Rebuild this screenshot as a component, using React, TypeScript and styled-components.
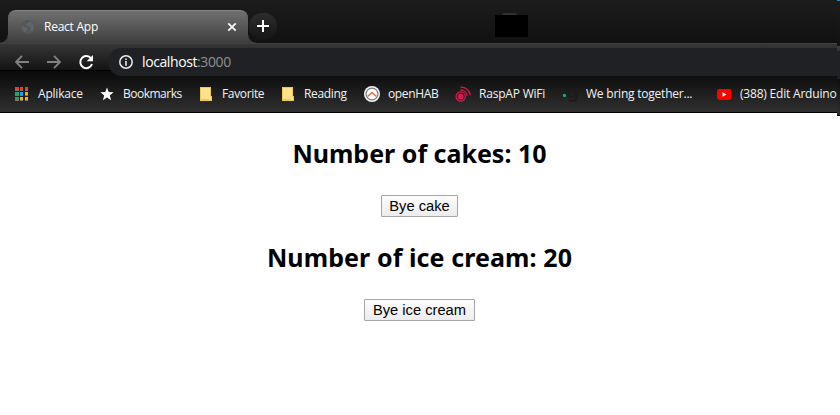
import React from 'react';
import styled, { createGlobalStyle } from 'styled-components';

const GlobalStyle = createGlobalStyle`
  * { box-sizing: border-box; }
  body { margin: 0; background: #fff; overflow: hidden; font-family: "Open Sans", "Noto Sans", sans-serif; }
`;

const Window = styled.div`
  width: 840px;
  height: 415px;
  background: #fff;
  position: relative;
`;

const TabStrip = styled.div`
  height: 43px;
  display: flex;
  align-items: flex-start;
  padding: 10px 0 0 8px;
  background: linear-gradient(#1c1c1c, #111 100%);
`;

const Tab = styled.div`
  position: relative;
  width: 240px;
  height: 33px;
  padding: 0 10px 0 12px;
  display: flex;
  align-items: center;
  border-radius: 8px 8px 0 0;
  border-top: 1px solid #858585;
  background: linear-gradient(#707070, #3e3e3e);
  &::before, &::after {
    content: '';
    position: absolute;
    bottom: 0;
    width: 8px;
    height: 8px;
  }
  &::before { left: -8px; background: radial-gradient(circle at 0 0, transparent 7px, #3e3e3e 8px); }
  &::after { right: -8px; background: radial-gradient(circle at 100% 0, transparent 7px, #3e3e3e 8px); }
`;

const Label = styled.span<{ $space?: number }>`
  font-size: 12px;
  line-height: 16px;
  white-space: nowrap;
  color: #f2f3f4;
  letter-spacing: ${(p) => p.$space ?? 0}px;
`;

const TabTitle = styled(Label)`
  flex: 1;
  margin: -1px 0 0 8px;
  color: #fff;
`;

const NewTab = styled.div`
  width: 28px;
  height: 27px;
  margin: 3px 0 0 1px;
  border-radius: 13px;
  display: grid;
  place-items: center;
  background: linear-gradient(#2d2d2d, #151515);
  svg { margin-top: -2px; }
`;

const Redaction = styled.div`
  width: 33px;
  height: 22px;
  margin: 5px 0 0 218px;
  background: #000;
  position: relative;
  &::before {
    content: '';
    position: absolute;
    left: 7px;
    top: -2px;
    width: 15px;
    height: 2px;
    border-radius: 8px 8px 0 0;
    background: #303030;
  }
`;

const Toolbar = styled.div`
  height: 33px;
  display: flex;
  align-items: center;
  padding-left: 14px;
  border-top: 1px solid #414141;
  background: linear-gradient(#363636 0, #141414 26px, #000 26px, #000 27px, #0b0b0b 27px, #0e0e0e);
`;

const NavButton = styled.div`
  width: 32px;
  height: 17px;
  margin-top: 4px;
  display: flex;
  align-items: center;
`;

const AddressBar = styled.div`
  flex: 1;
  align-self: flex-end;
  height: 28px;
  margin-left: -2px;
  padding-left: 11px;
  display: flex;
  align-items: center;
  border-radius: 14px 0 0 14px;
  background: #202124;
`;

const Url = styled.span`
  margin-left: 9px;
  font-size: 14px;
  line-height: 20px;
  letter-spacing: -0.4px;
  color: #fff;
`;

const Port = styled.span`
  color: #8f9195;
`;

const Bookmarks = styled.div`
  height: 37px;
  display: grid;
  grid-template-columns: 85px 99px 82px 84px 91px 107px 154px 124px;
  align-items: center;
  border-bottom: 1px solid #000;
  padding-left: 14px;
  background: linear-gradient(#0e0e0e, #303030);
`;

const Bookmark = styled.div`
  display: grid;
  grid-template-columns: 16px 1fr;
  column-gap: 8px;
  align-items: center;
  svg { display: block; }
`;

const EdgeSliver = styled.div`
  position: absolute;
  top: 0;
  right: 0;
  width: 3px;
  height: 116px;
  background: linear-gradient(#1684d8 0, #1684d8 1px, #1c1c1c 1px, #121212 46px, #414141 46px, #303030 51px, #202124 51px, #202124 79px, #0e0e0e 79px, #303030 115px, #000 115px);
`;

const Page = styled.main`
  width: 839px;
  display: flex;
  flex-direction: column;
  align-items: center;
  padding-top: 24px;
`;

const Heading = styled.h2<{ $space: number }>`
  margin: 0;
  height: 34px;
  font-size: 25px;
  line-height: 32px;
  font-weight: 700;
  font-family: "Noto Sans", "Open Sans", sans-serif;
  letter-spacing: ${(p) => p.$space}px;
  color: #000;
  white-space: nowrap;
`;

const Button = styled.button<{ $width: number }>`
  width: ${(p) => p.$width}px;
  height: 22px;
  margin: 24px 0;
  padding: 0;
  border: 1px solid #a6a6a6;
  border-radius: 1px;
  background: linear-gradient(#fdfdfd, #ececec);
  font: 14.7px/18px "Liberation Sans", Arial, sans-serif;
  color: #000;
  white-space: nowrap;
`;

const Globe = () => (
  <svg width="16" height="16" viewBox="0 0 16 16">
    <circle cx="8" cy="8" r="7" fill="#54585d" />
    <path d="M9.5 2.2 8 4.2 6 4.8l1 2 3 .6 1 2.6-1.5 2.8 2.8-.8a6 6 0 0 0-2.8-9.8ZM2.4 6.5l2.8 2 2.2.6-.3 2.2-1.7 1.8A6 6 0 0 1 2.4 6.5Z" fill="#626568" />
  </svg>
);

const Arrow = ({ flip }: { flip?: boolean }) => (
  <svg width="16" height="16" viewBox="0 0 16 16" fill="none" stroke="#828282" strokeWidth="1.8">
    <path d={flip ? 'M1 8h13M8 1.8 14 8l-6 6.2' : 'M15 8H2M8 1.8 2 8l6 6.2'} />
  </svg>
);

const Reload = () => (
  <svg width="16" height="16" viewBox="0 0 16 16">
    <path d="M13.1 4.5A6 6 0 1 0 14 10" fill="none" stroke="#fff" strokeWidth="2" />
    <path d="M15 1v6.3H8.7Z" fill="#fff" />
  </svg>
);

const Info = () => (
  <svg width="14" height="14" viewBox="0 0 14 14">
    <circle cx="7" cy="7" r="6.2" fill="none" stroke="#e8eaed" strokeWidth="1.5" />
    <path d="M6.2 3.4h1.6V5H6.2ZM6.2 6.1h1.6v4.6H6.2Z" fill="#e8eaed" />
  </svg>
);

const Close = () => (
  <svg width="12" height="12" viewBox="0 0 12 12" stroke="#fff" strokeWidth="1.7">
    <path d="m2.3 2.3 7.4 7.4M9.7 2.3l-7.4 7.4" />
  </svg>
);

const Plus = () => (
  <svg width="12" height="12" viewBox="0 0 12 12">
    <path d="M5 0h2v5h5v2H7v5H5V7H0V5h5Z" fill="#fff" />
  </svg>
);

const appColours = ['#f0392f', '#f0392f', '#f0392f', '#27a35a', '#2196f3', '#f5b400', '#27a35a', '#f5b400', '#f5b400'];
const Apps = () => (
  <svg width="16" height="16" viewBox="0 0 16 16" shapeRendering="crispEdges">
    {appColours.map((fill, i) => (
      <g key={i}>
        <rect x={1 + (i % 3) * 5} y={1 + Math.floor(i / 3) * 5} width={i % 3 === 0 ? 4 : 3} height="3" fill={fill} />
        <rect x={1 + (i % 3) * 5} y={4 + Math.floor(i / 3) * 5} width={i % 3 === 0 ? 4 : 3} height="1" fill="#777" />
      </g>
    ))}
  </svg>
);

const Star = () => (
  <svg width="16" height="16" viewBox="0 0 16 16">
    <path d="m8 1.5 1.7 4.6 4.9.2-3.8 3.1 1.3 4.8L8 11.5l-4.1 2.7 1.3-4.8-3.8-3.1 4.9-.2Z" fill="#fff" />
  </svg>
);

const Folder = () => (
  <svg width="16" height="16" viewBox="0 0 16 16">
    <path d="M2 1h11v9h1v5H2Z" fill="#f3c84f" />
    <path d="M3 2h9v9h1v3h-2v-1H3Z" fill="#ffe28c" />
  </svg>
);

const OpenHab = () => (
  <svg width="16" height="16" viewBox="0 0 16 16">
    <circle cx="8" cy="8" r="8" fill="#f4f4f4" />
    <circle cx="8" cy="8" r="5.9" fill="#fff" stroke="#77797b" strokeWidth="1.2" />
    <path d="m3.5 10.5 4.5-4 4.5 4" fill="none" stroke="#ec6540" strokeWidth="1.5" />
  </svg>
);

const RaspAp = () => (
  <svg width="16" height="16" viewBox="0 0 16 16" fill="none" stroke="#d81b4b">
    <circle cx="5.7" cy="10.5" r="4.6" strokeWidth="1.2" />
    <circle cx="5.7" cy="10.5" r="2.9" fill="#d81b4b" stroke="none" />
    <path d="M5.5 4c3.6-.1 6.3 2.5 6.8 6M5.5 1.2c5.4-.1 9.2 3.6 9.9 8.2" strokeWidth="1.3" />
  </svg>
);

const GLetter = styled.span`
  position: relative;
  width: 16px;
  height: 16px;
  padding-left: 5px;
  font: 700 19px/11px "Liberation Sans", sans-serif;
  color: #1a1c1c;
  &::before {
    content: '';
    position: absolute;
    left: 1px;
    top: 8px;
    width: 3px;
    height: 3px;
    border-radius: 1px;
    background: #11ab94;
  }
`;

const YouTube = () => (
  <svg width="16" height="16" viewBox="0 0 16 16">
    <rect x="1" y="3" width="14.5" height="11" rx="2.4" fill="#f00" />
    <path d="m6.5 6.2 4 2.3-4 2.3Z" fill="#fff" />
  </svg>
);

const bookmarks = [
  { icon: <Apps />, text: 'Aplikace', space: -0.2 },
  { icon: <Star />, text: 'Bookmarks', space: -0.5 },
  { icon: <Folder />, text: 'Favorite', space: -0.35 },
  { icon: <Folder />, text: 'Reading', space: -0.35 },
  { icon: <OpenHab />, text: 'openHAB', space: -0.35 },
  { icon: <RaspAp />, text: 'RaspAP WiFi', space: -0.2 },
  { icon: <GLetter>g</GLetter>, text: 'We bring together...', space: -0.22 },
  { icon: <YouTube />, text: '(388) Edit Arduino', space: -0.2 },
];

export default function App() {
  return (
    <Window>
      <GlobalStyle />
      <TabStrip>
        <Tab>
          <Globe />
          <TabTitle $space={-0.25}>React App</TabTitle>
          <Close />
        </Tab>
        <NewTab><Plus /></NewTab>
        <Redaction />
      </TabStrip>
      <Toolbar>
        <NavButton><Arrow /></NavButton>
        <NavButton><Arrow flip /></NavButton>
        <NavButton><Reload /></NavButton>
        <AddressBar>
          <Info />
          <Url>localhost<Port>:3000</Port></Url>
        </AddressBar>
      </Toolbar>
      <Bookmarks>
        {bookmarks.map((b) => (
          <Bookmark key={b.text}>
            {b.icon}
            <Label $space={b.space}>{b.text}</Label>
          </Bookmark>
        ))}
      </Bookmarks>
      <EdgeSliver />
      <Page>
        <Heading $space={0}>Number of cakes: 10</Heading>
        <Button $width={77}>Bye cake</Button>
        <Heading $space={0.1}>Number of ice cream: 20</Heading>
        <Button $width={111}>Bye ice cream</Button>
      </Page>
    </Window>
  );
}
